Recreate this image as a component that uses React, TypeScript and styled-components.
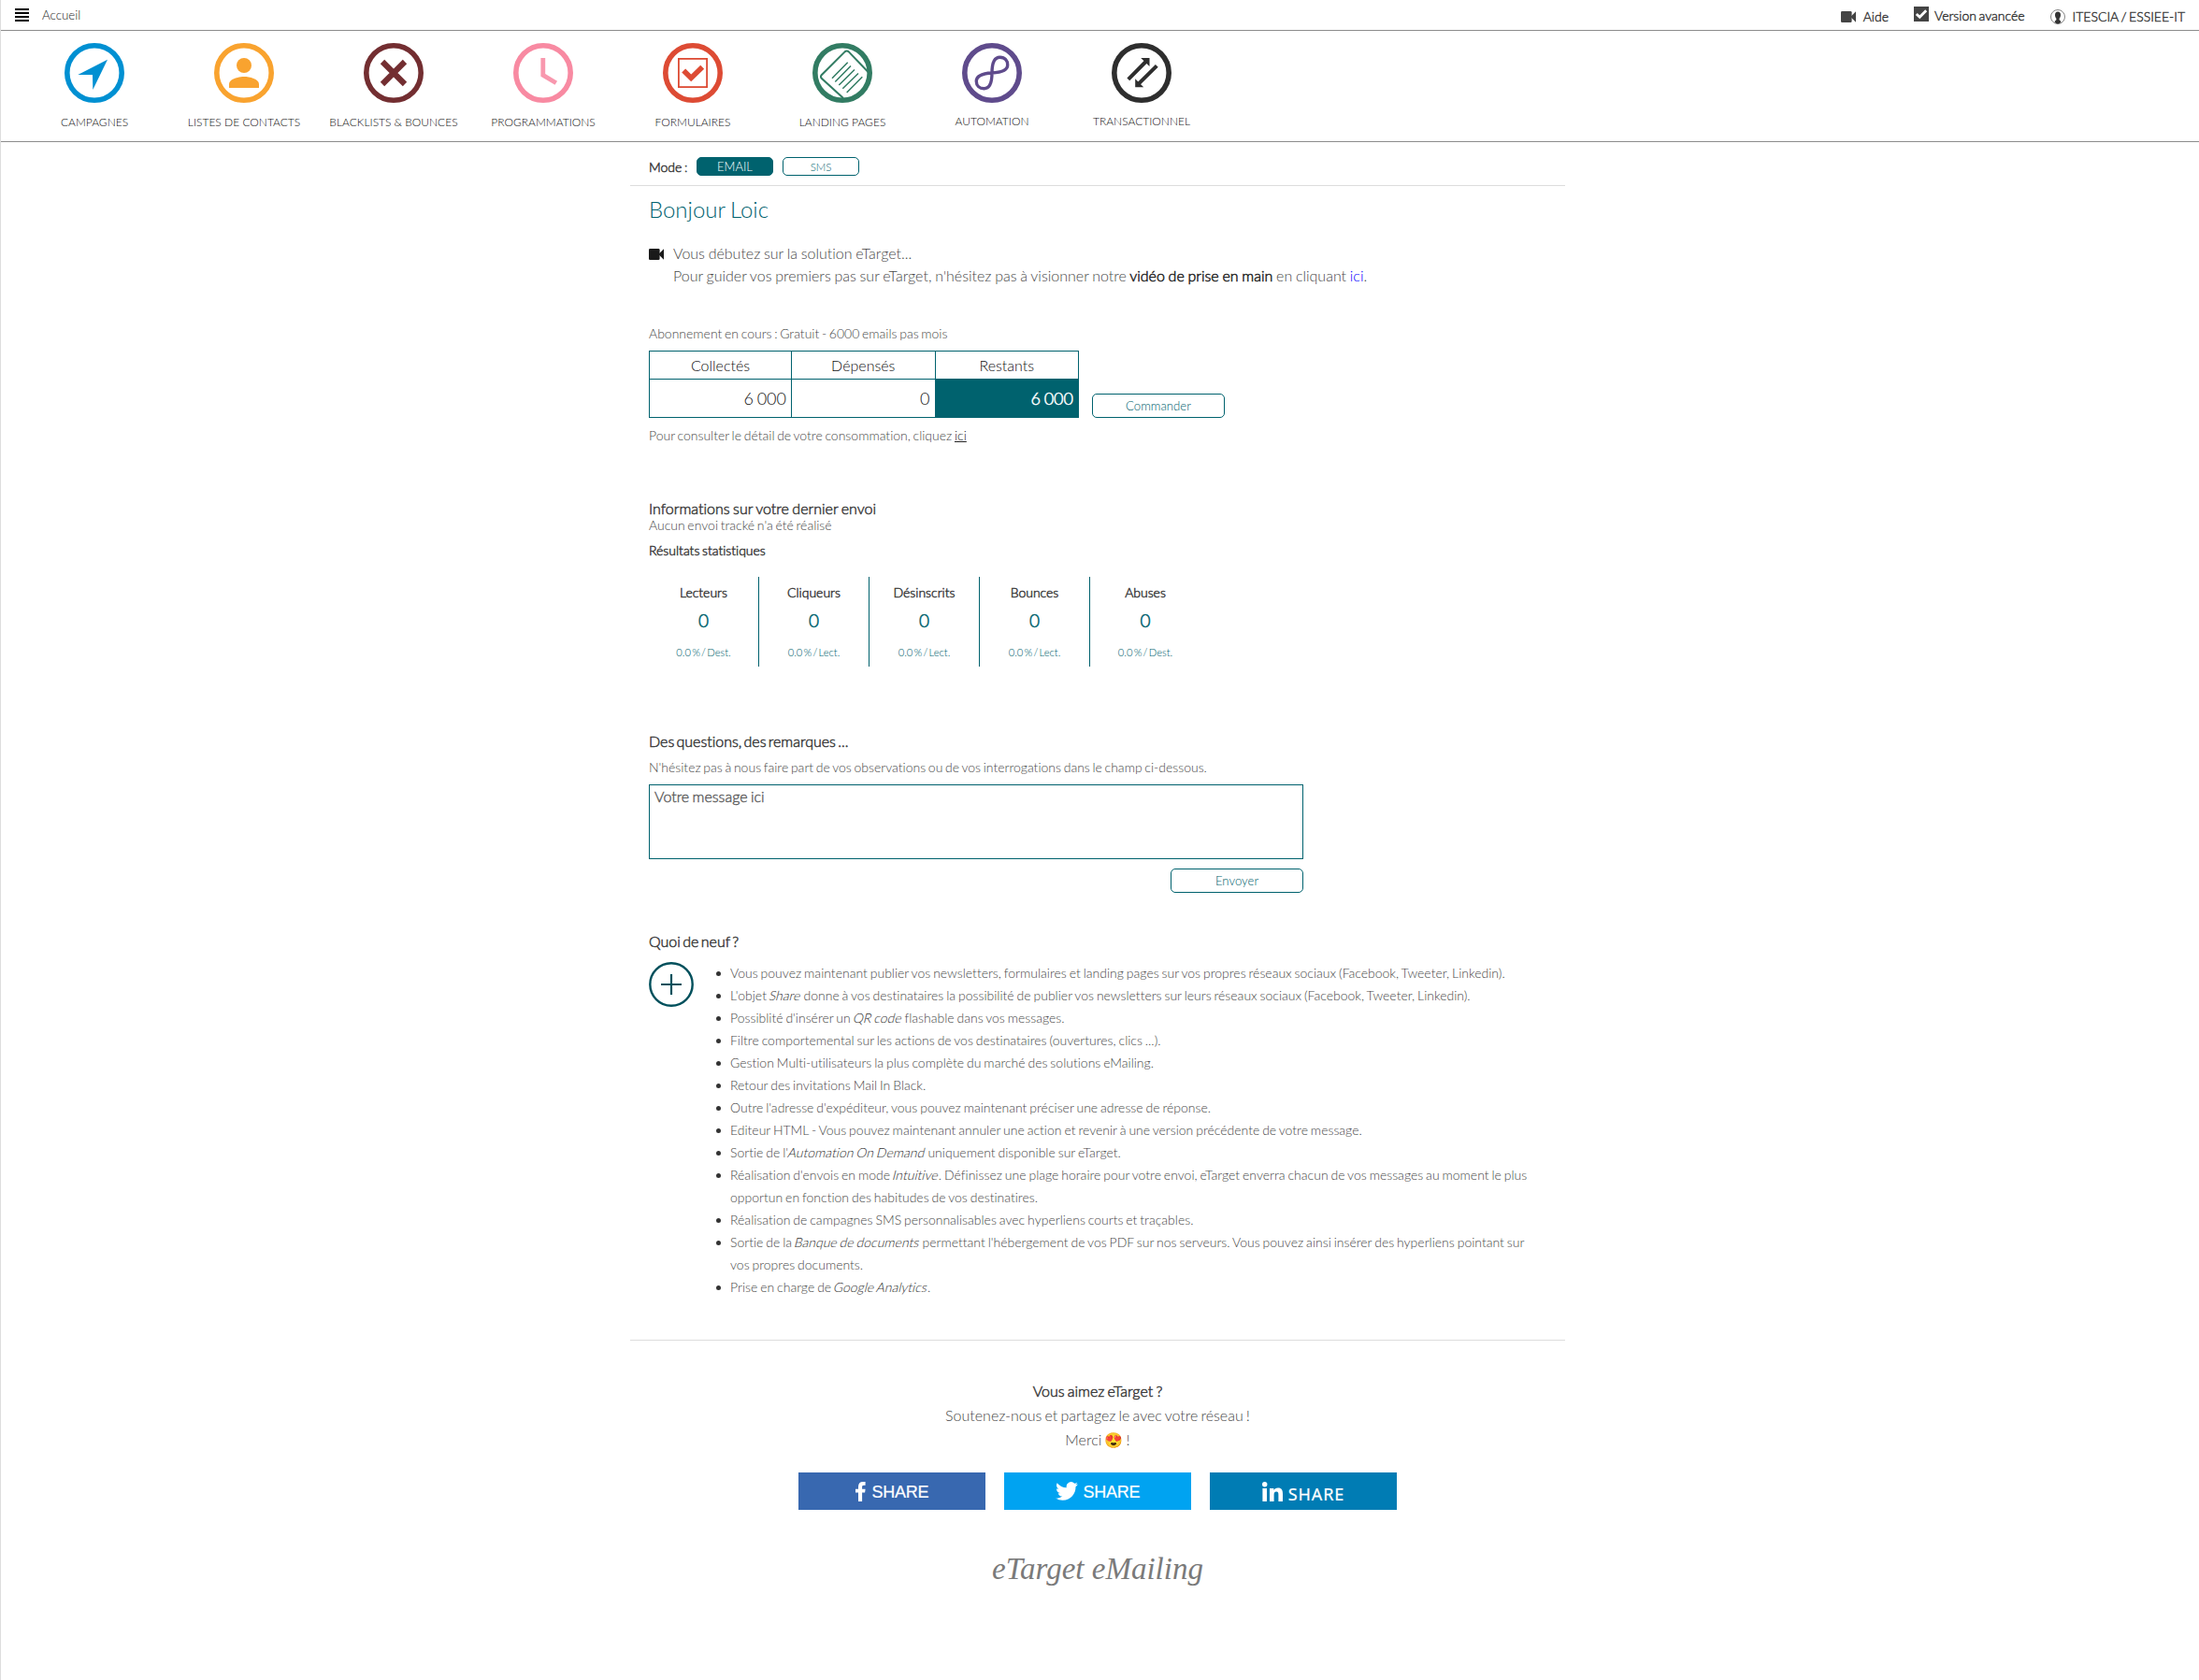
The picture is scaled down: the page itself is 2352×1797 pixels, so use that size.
import React from "react";
import styled, { createGlobalStyle, css } from "styled-components";

const TEAL = "#00626e";

const GlobalStyle = createGlobalStyle`
  * { box-sizing: border-box; }
  body { margin: 0; background: #fff; }
  h1, h2, h3, p, ul { margin: 0; padding: 0; font-weight: inherit; font-size: inherit; }
  button, textarea { font-family: inherit; font-weight: inherit; }
`;

const strong = css`
  color: #3c3c3c;
  -webkit-text-stroke: 0.5px currentColor;
`;

const Page = styled.div`
  min-height: 1797px;
  border-left: 1px solid #ddd;
  font-family: Lato, "Liberation Sans", sans-serif;
  font-weight: 300;
  font-size: 16px;
  font-variant-ligatures: none;
  word-spacing: -0.075em;
  color: #484848;
`;

/* ---------- top bar ---------- */
const TopBar = styled.header`
  display: flex;
  justify-content: space-between;
  height: 33px;
  padding: 0 15px 0 15px;
  border-bottom: 1px solid #8c8c8c;
`;
const Breadcrumb = styled.div`
  display: flex;
  align-items: center;
  gap: 14px;
  font-size: 13.33px;
  color: #222;
`;
const Burger = styled.span`
  display: grid;
  gap: 2px;
  width: 15px;
`;
const BurgerBar = styled.i`
  height: 2px;
  background: #000;
`;
const UserLinks = styled.nav`
  display: flex;
  align-items: flex-start;
  gap: 27px;
`;
const UserLink = styled.a<{ $top: number; $gap: number }>`
  display: flex;
  align-items: flex-start;
  gap: ${(p) => p.$gap}px;
  padding-top: ${(p) => p.$top}px;
  font-size: 14px;
  line-height: 20px;
  color: #333;
  -webkit-text-stroke: 0.4px currentColor;
`;
const LinkIcon = styled.span<{ $top: number }>`
  display: block;
  height: 16px;
  margin-top: ${(p) => p.$top}px;
  svg { display: block; }
`;

/* ---------- main menu ---------- */
const MainMenu = styled.nav`
  display: flex;
  height: 119px;
  padding: 13px 0 0 20px;
  border-bottom: 1px solid #8c8c8c;
`;
const MenuItem = styled.a<{ $raised?: boolean }>`
  display: flex;
  flex-direction: column;
  align-items: center;
  gap: ${(p) => (p.$raised ? 13 : 14)}px;
  width: 160px;
  font-size: 12px;
  line-height: 14px;
  word-spacing: 0;
  color: #111;
  svg { display: block; }
`;

/* ---------- content ---------- */
const Content = styled.main`
  width: 1000px;
  margin-left: 673px;
`;
const ModeBar = styled.div`
  display: flex;
  align-items: flex-start;
  height: 47px;
  padding: 16px 0 0 20px;
  border-bottom: 1px solid #ddd;
`;
const ModeLabel = styled.span`
  ${strong}
  width: 51px;
  font-size: 14px;
  line-height: 22px;
`;
const ModeButton = styled.button<{ $active?: boolean }>`
  width: 82px;
  height: 20px;
  margin-right: 10px;
  padding: 0;
  border: 1px solid ${TEAL};
  border-radius: 5px;
  background: ${(p) => (p.$active ? TEAL : "#fff")};
  color: ${(p) => (p.$active ? "#fff" : TEAL)};
  font-size: ${(p) => (p.$active ? 13 : 11.5)}px;
  line-height: ${(p) => (p.$active ? 18 : 19)}px;
`;
const Body = styled.div`
  display: flex;
  flex-direction: column;
  align-items: flex-start;
  height: 1235px;
  padding: 10px 20px 0;
  border-bottom: 1px solid #ddd;
`;
const Greeting = styled.h1`
  height: 30px;
  font-size: 24px;
  line-height: 30px;
  word-spacing: -0.04em;
  color: ${TEAL};
`;
const Intro = styled.div`
  display: flex;
  gap: 10px;
  margin-top: 20px;
  line-height: 24px;
  word-spacing: -0.038em;
  svg { display: block; margin-top: 7px; }
`;
const Strong = styled.b`
  ${strong}
  font-weight: 300;
  color: #222;
`;
const BlueLink = styled.a`
  color: #0000ff;
`;
const Underlined = styled.a`
  color: #222;
  text-decoration: underline;
`;
const Note = styled.p<{ $top: number; $height?: number }>`
  margin-top: ${(p) => p.$top}px;
  font-size: 14px;
  line-height: ${(p) => p.$height ?? 18}px;
  word-spacing: -0.08em;
  white-space: nowrap;
`;
const Heading = styled.h2<{ $top: number; $spacing?: number }>`
  ${strong}
  margin-top: ${(p) => p.$top}px;
  margin-bottom: 1px;
  line-height: 20px;
  word-spacing: ${(p) => p.$spacing ?? -0.07}em;
`;
const SubHeading = styled.h3`
  ${strong}
  margin-top: 11px;
  font-size: 14px;
  line-height: 18px;
`;

const Plan = styled.div`
  display: flex;
  align-items: flex-end;
  gap: 14px;
  margin-top: 9px;
`;
const Credits = styled.table`
  width: 460px;
  height: 72px;
  border-collapse: collapse;
  table-layout: fixed;
`;
const CreditHead = styled.th`
  height: 30px;
  padding: 0;
  border: 1px solid ${TEAL};
  font-weight: 300;
  line-height: 20px;
  color: #111;
  &:first-child { width: 152px; }
`;
const CreditCell = styled.td<{ $filled?: boolean }>`
  padding: 0 5px 0 0;
  border: 1px solid ${TEAL};
  text-align: right;
  font-size: 18px;
  line-height: 24px;
  color: ${(p) => (p.$filled ? "#fff" : "#111")};
  background: ${(p) => (p.$filled ? TEAL : "transparent")};
  -webkit-text-stroke: ${(p) => (p.$filled ? "0.5px #fff" : "0")};
`;
const ActionButton = styled.button`
  width: 142px;
  height: 26px;
  padding: 0;
  border: 1px solid ${TEAL};
  border-radius: 5px;
  background: #fff;
  color: ${TEAL};
  font-size: 13.2px;
  line-height: 24px;
`;

const Stats = styled.div`
  display: flex;
  margin-top: 19px;
`;
const Stat = styled.div`
  display: flex;
  flex-direction: column;
  align-items: center;
  width: 118px;
  height: 96px;
  padding-top: 8px;
  border-right: 1px solid ${TEAL};
  &:last-child { border-right: 0; }
`;
const StatLabel = styled.span`
  ${strong}
  font-size: 14px;
  line-height: 18px;
`;
const StatValue = styled.span`
  margin-top: 9px;
  font-size: 19px;
  line-height: 24px;
  color: ${TEAL};
  -webkit-text-stroke: 0.55px currentColor;
`;
const StatRate = styled.span`
  margin-top: 14px;
  font-size: 11.2px;
  line-height: 16px;
  word-spacing: -0.16em;
  color: ${TEAL};
`;

const Feedback = styled.div`
  display: flex;
  flex-direction: column;
  align-items: flex-end;
  gap: 10px;
  margin-top: 9px;
`;
const Message = styled.textarea`
  display: block;
  width: 700px;
  height: 80px;
  padding: 2px 5px;
  border: 1px solid ${TEAL};
  resize: none;
  font-size: 16px;
  line-height: 20px;
  word-spacing: -0.06em;
  &::placeholder {
    color: #5c5c5c;
    -webkit-text-stroke: 0.4px #5c5c5c;
  }
`;

const News = styled.div`
  display: flex;
  gap: 39px;
  margin-top: 11px;
`;
const NewsList = styled.ul`
  width: 812px;
  font-size: 14px;
  line-height: 24px;
  word-spacing: -0.063em;
  list-style: none;
`;
const NewsItem = styled.li`
  position: relative;
  padding-right: 20px;
  white-space: nowrap;
  &::before {
    content: "";
    position: absolute;
    left: -15px;
    top: 10px;
    width: 5px;
    height: 5px;
    border-radius: 50%;
    background: #333;
  }
`;
const Term = styled.em`
  display: inline-block;
  font-style: normal;
  transform: skewX(-14deg);
  color: #333;
`;

/* ---------- footer ---------- */
const Footer = styled.footer`
  display: flex;
  flex-direction: column;
  align-items: center;
  padding-top: 41px;
  line-height: 26px;
`;
const FooterTitle = styled.h2`
  ${strong}
`;
const Shares = styled.div`
  display: flex;
  gap: 20px;
  margin-top: 22px;
`;
const ShareButton = styled.a<{ $color: string; $gap: number; $font: string; $drop?: number; $tracking?: number }>`
  display: flex;
  align-items: center;
  justify-content: center;
  gap: ${(p) => p.$gap}px;
  width: 200px;
  height: 40px;
  background: ${(p) => p.$color};
  color: #fff;
  font: 400 18px/24px ${(p) => p.$font};
  letter-spacing: ${(p) => p.$tracking ?? -0.25}px;
  -webkit-text-stroke: 0.2px #fff;
  svg { display: block; }
  span { padding-top: ${(p) => p.$drop ?? 1}px; }
`;
const Signature = styled.div`
  margin-top: 43px;
  font: italic 400 33px/40px "Brush Script MT", "Liberation Serif", cursive;
  word-spacing: 0;
  color: #7a7a7a;
`;

/* ---------- icons ---------- */
const Camera = ({ color }: { color: string }) => (
  <svg width="16" height="12" viewBox="0 0 16 12" fill={color}>
    <rect x="0" y="0" width="11.6" height="12" rx="1.3" />
    <path d="M10.3 6 16 .2V11.800Z" />
  </svg>
);

const Round = ({ color, children }: { color: string; children: React.ReactNode }) => (
  <svg width="64" height="64" viewBox="0 0 64 64" fill="none" stroke={color}>
    <circle cx="32" cy="32" r="29.2" strokeWidth="5.6" />
    {children}
  </svg>
);

const MENU: { label: string; color: string; raised?: boolean; art: React.ReactNode }[] = [
  { label: "CAMPAGNES", color: "#0090d2", art: <path d="M46 17.7 30.3 50 30 34H14.3Z" fill="#0090d2" stroke="none" /> },
  {
    label: "LISTES DE CONTACTS",
    color: "#f9a32f",
    art: (
      <g fill="#f9a32f" stroke="none">
        <circle cx="32" cy="24" r="8" />
        <path d="M16 48V44C16 38.5 26 36 32 36S48 38.5 48 44V48Z" />
      </g>
    ),
  },
  { label: "BLACKLISTS & BOUNCES", color: "#732e31", art: <path d="M20 20 44 44M44 20 20 44" strokeWidth="6.2" /> },
  { label: "PROGRAMMATIONS", color: "#f88aa2", art: <path d="M31.8 16V34.3L45.8 42.7" stroke="#f898ae" strokeWidth="4.8" /> },
  {
    label: "FORMULAIRES",
    color: "#dd4b34",
    art: (
      <>
        <rect x="16.9" y="16.9" width="30.2" height="30.2" strokeWidth="1.8" />
        <path d="M22.2 29.5 30.2 37.4 42.2 25.8" strokeWidth="5.6" />
      </>
    ),
  },
  {
    label: "LANDING PAGES",
    color: "#327c63",
    art: (
      <>
        <path d="M33 59 9.7 37.8Q8.2 36 9.7 34.2L34.6 9.4Q36.7 7.7 38.8 9.4L59.5 31" strokeWidth="2" />
        <path d="M21 37.7 37.7 20.7M24.3 41.5 41 24.5M28.3 45 45 28.5M32.3 48.7 49 32.5M36.7 53 53.3 36.3" strokeWidth="1.5" />
      </>
    ),
  },
  {
    label: "AUTOMATION",
    color: "#5f4b8c",
    raised: true,
    art: <path d="M32 32C32 20 35 15.3 40.5 15.3 46 15.3 48.7 19 48.7 23.5 48.7 29.5 42 31.5 32 32 22 32.5 15.3 35 15.3 41 15.3 45.5 18.5 48.7 23.5 48.7 29 48.7 32 43 32 32Z" strokeWidth="3.4" />,
  },
  {
    label: "TRANSACTIONNEL",
    color: "#2e2e2e",
    raised: true,
    art: (
      <>
        <path d="M17.8 38.8 37 19.5M48.3 24.3 28.8 43.7" strokeWidth="4" />
        <path d="M31.2 16H40.5V25ZM25.2 38.2V47.2H34.2Z" fill="#2e2e2e" stroke="none" />
      </>
    ),
  },
];

const STATS: [string, string][] = [
  ["Lecteurs", "0.0 % / Dest."],
  ["Cliqueurs", "0.0 % / Lect."],
  ["Désinscrits", "0.0 % / Lect."],
  ["Bounces", "0.0 % / Lect."],
  ["Abuses", "0.0 % / Dest."],
];

const NEWS: React.ReactNode[] = [
  "Vous pouvez maintenant publier vos newsletters, formulaires et landing pages sur vos propres réseaux sociaux (Facebook, Tweeter, Linkedin).",
  <>L'objet <Term>Share</Term> donne à vos destinataires la possibilité de publier vos newsletters sur leurs réseaux sociaux (Facebook, Tweeter, Linkedin).</>,
  <>Possiblité d'insérer un <Term>QR code</Term> flashable dans vos messages.</>,
  "Filtre comportemental sur les actions de vos destinataires (ouvertures, clics ...).",
  "Gestion Multi-utilisateurs la plus complète du marché des solutions eMailing.",
  "Retour des invitations Mail In Black.",
  "Outre l'adresse d'expéditeur, vous pouvez maintenant préciser une adresse de réponse.",
  "Editeur HTML - Vous pouvez maintenant annuler une action et revenir à une version précédente de votre message.",
  <>Sortie de l'<Term>Automation On Demand</Term> uniquement disponible sur eTarget.</>,
  <>Réalisation d'envois en mode <Term>Intuitive</Term>. Définissez une plage horaire pour votre envoi, eTarget enverra chacun de vos messages au moment le plus<br />opportun en fonction des habitudes de vos destinatires.</>,
  "Réalisation de campagnes SMS personnalisables avec hyperliens courts et traçables.",
  <>Sortie de la <Term>Banque de documents</Term> permettant l'hébergement de vos PDF sur nos serveurs. Vous pouvez ainsi insérer des hyperliens pointant sur<br />vos propres documents.</>,
  <>Prise en charge de <Term>Google Analytics</Term>.</>,
];

const ARIAL = '"Liberation Sans", Arial, sans-serif';

export default function App() {
  return (
    <Page>
      <GlobalStyle />
      <TopBar>
        <Breadcrumb>
          <Burger>
            <BurgerBar /><BurgerBar /><BurgerBar /><BurgerBar />
          </Burger>
          Accueil
        </Breadcrumb>
        <UserLinks>
          <UserLink $top={8} $gap={8}>
            <LinkIcon $top={4}><Camera color="#444" /></LinkIcon>
            Aide
          </UserLink>
          <UserLink $top={7} $gap={6}>
            <LinkIcon $top={0}>
              <svg width="16" height="16" viewBox="0 0 16 16">
                <rect width="16" height="16" fill="#444" />
                <path d="M2.8 8 6.3 11.3 13.2 4.3" fill="none" stroke="#fff" strokeWidth="2.8" />
              </svg>
            </LinkIcon>
            Version avancée
          </UserLink>
          <UserLink $top={8} $gap={8}>
            <LinkIcon $top={2}>
              <svg width="16" height="16" viewBox="0 0 16 16">
                <circle cx="8" cy="8" r="7.5" fill="#fff" stroke="#666" strokeWidth=".8" />
                <path d="M8 2.5C10 2.5 11 3.9 11 5.9 11 7.6 10.3 9 9.6 9.7V11.300L11.500 13C10.700 14.800 9 15.500 8 15.500S5.300 14.800 4.500 13L6.4 11.300V9.7C5.7 9 5 7.6 5 5.9 5 3.9 6 2.5 8 2.5Z" fill="#333" />
              </svg>
            </LinkIcon>
            ITESCIA / ESSIEE-IT
          </UserLink>
        </UserLinks>
      </TopBar>

      <MainMenu>
        {MENU.map((m) => (
          <MenuItem key={m.label} $raised={m.raised}>
            <Round color={m.color}>{m.art}</Round>
            {m.label}
          </MenuItem>
        ))}
      </MainMenu>

      <Content>
        <ModeBar>
          <ModeLabel>Mode :</ModeLabel>
          <ModeButton $active>EMAIL</ModeButton>
          <ModeButton>SMS</ModeButton>
        </ModeBar>

        <Body>
          <Greeting>Bonjour Loic</Greeting>
          <Intro>
            <Camera color="#1a1a1a" />
            <p>
              Vous débutez sur la solution eTarget...<br />
              Pour guider vos premiers pas sur eTarget, n'hésitez pas à visionner notre{" "}
              <Strong>vidéo de prise en main</Strong> en cliquant <BlueLink>ici</BlueLink>.
            </p>
          </Intro>

          <Note $top={41}>Abonnement en cours : Gratuit - 6000 emails pas mois</Note>
          <Plan>
            <Credits>
              <tbody>
                <tr>
                  <CreditHead>Collectés</CreditHead>
                  <CreditHead>Dépensés</CreditHead>
                  <CreditHead>Restants</CreditHead>
                </tr>
                <tr>
                  <CreditCell>6 000</CreditCell>
                  <CreditCell>0</CreditCell>
                  <CreditCell $filled>6 000</CreditCell>
                </tr>
              </tbody>
            </Credits>
            <ActionButton>Commander</ActionButton>
          </Plan>
          <Note $top={10}>
            Pour consulter le détail de votre consommation, cliquez <Underlined>ici</Underlined>
          </Note>

          <Heading $top={59} $spacing={-0.05}>Informations sur votre dernier envoi</Heading>
          <Note $top={0} $height={14}>Aucun envoi tracké n'a été réalisé</Note>
          <SubHeading>Résultats statistiques</SubHeading>
          <Stats>
            {STATS.map(([label, rate]) => (
              <Stat key={label}>
                <StatLabel>{label}</StatLabel>
                <StatValue>0</StatValue>
                <StatRate>{rate}</StatRate>
              </Stat>
            ))}
          </Stats>

          <Heading $top={70} $spacing={-0.13}>Des questions, des remarques ...</Heading>
          <Note $top={8}>
            N'hésitez pas à nous faire part de vos observations ou de vos interrogations dans le champ ci-dessous.
          </Note>
          <Feedback>
            <Message placeholder="Votre message ici" />
            <ActionButton>Envoyer</ActionButton>
          </Feedback>

          <Heading $top={42} $spacing={-0.12}>Quoi de neuf ?</Heading>
          <News>
            <svg width="48" height="48" viewBox="0 0 48 48" fill="none" stroke="#00505c">
              <circle cx="24" cy="24" r="22.7" strokeWidth="2.4" />
              <path d="M24 13V35M13 24H35" strokeWidth="2.2" />
            </svg>
            <NewsList>
              {NEWS.map((n, i) => (
                <NewsItem key={i}>{n}</NewsItem>
              ))}
            </NewsList>
          </News>
        </Body>

        <Footer>
          <FooterTitle>Vous aimez eTarget ?</FooterTitle>
          <p>Soutenez-nous et partagez le avec votre réseau !</p>
          <p>Merci 😍 !</p>
          <Shares>
            <ShareButton $color="#3868b0" $gap={7} $font={ARIAL}>
              <svg width="11" height="21" viewBox="0 0 11 21" fill="#fff">
                <path d="M3 21V11.5H0V7.7H3V5.2C3 1.8 4.9 0 7.9 0H10.6V3.7H8.9C7.5 3.7 7.1 4.4 7.1 5.5V7.7H10.6L10.1 11.5H7.1V21Z" />
              </svg>
              <span>SHARE</span>
            </ShareButton>
            <ShareButton $color="#00a3f1" $gap={6} $font={ARIAL}>
              <svg width="24" height="20" viewBox="0 0 24 19.5" fill="#fff">
                <path d="M24 2.3a9.8 9.8 0 0 1-2.8.8A4.9 4.9 0 0 0 23.3.4a9.9 9.9 0 0 1-3.1 1.2 4.9 4.9 0 0 0-8.4 4.5A14 14 0 0 1 1.7.9a4.9 4.9 0 0 0 1.5 6.6 4.9 4.9 0 0 1-2.2-.6v.1a4.9 4.9 0 0 0 3.9 4.8 4.9 4.9 0 0 1-2.2.1 4.9 4.9 0 0 0 4.6 3.4A9.9 9.9 0 0 1 0 17.3a14 14 0 0 0 7.5 2.2c9.1 0 14-7.5 14-14v-.6A10 10 0 0 0 24 2.3Z" />
              </svg>
              <span>SHARE</span>
            </ShareButton>
            <ShareButton $color="#007cb4" $gap={6} $font={'"Noto Sans", "Open Sans", sans-serif'} $drop={6} $tracking={0.9}>
              <svg width="22" height="21" viewBox="0 0 22 21" fill="#fff">
                <circle cx="2.7" cy="2.7" r="2.7" />
                <path d="M.4 7H5V21H.4ZM8 7H12.4V9C13.1 7.7 14.7 6.6 16.9 6.6 21 6.6 22 9.3 22 13V21H17.4V13.9C17.4 12.1 17.2 10.5 15.2 10.5 13.1 10.5 12.6 12.1 12.6 13.9V21H8Z" />
              </svg>
              <span>SHARE</span>
            </ShareButton>
          </Shares>
          <Signature>eTarget eMailing</Signature>
        </Footer>
      </Content>
    </Page>
  );
}
